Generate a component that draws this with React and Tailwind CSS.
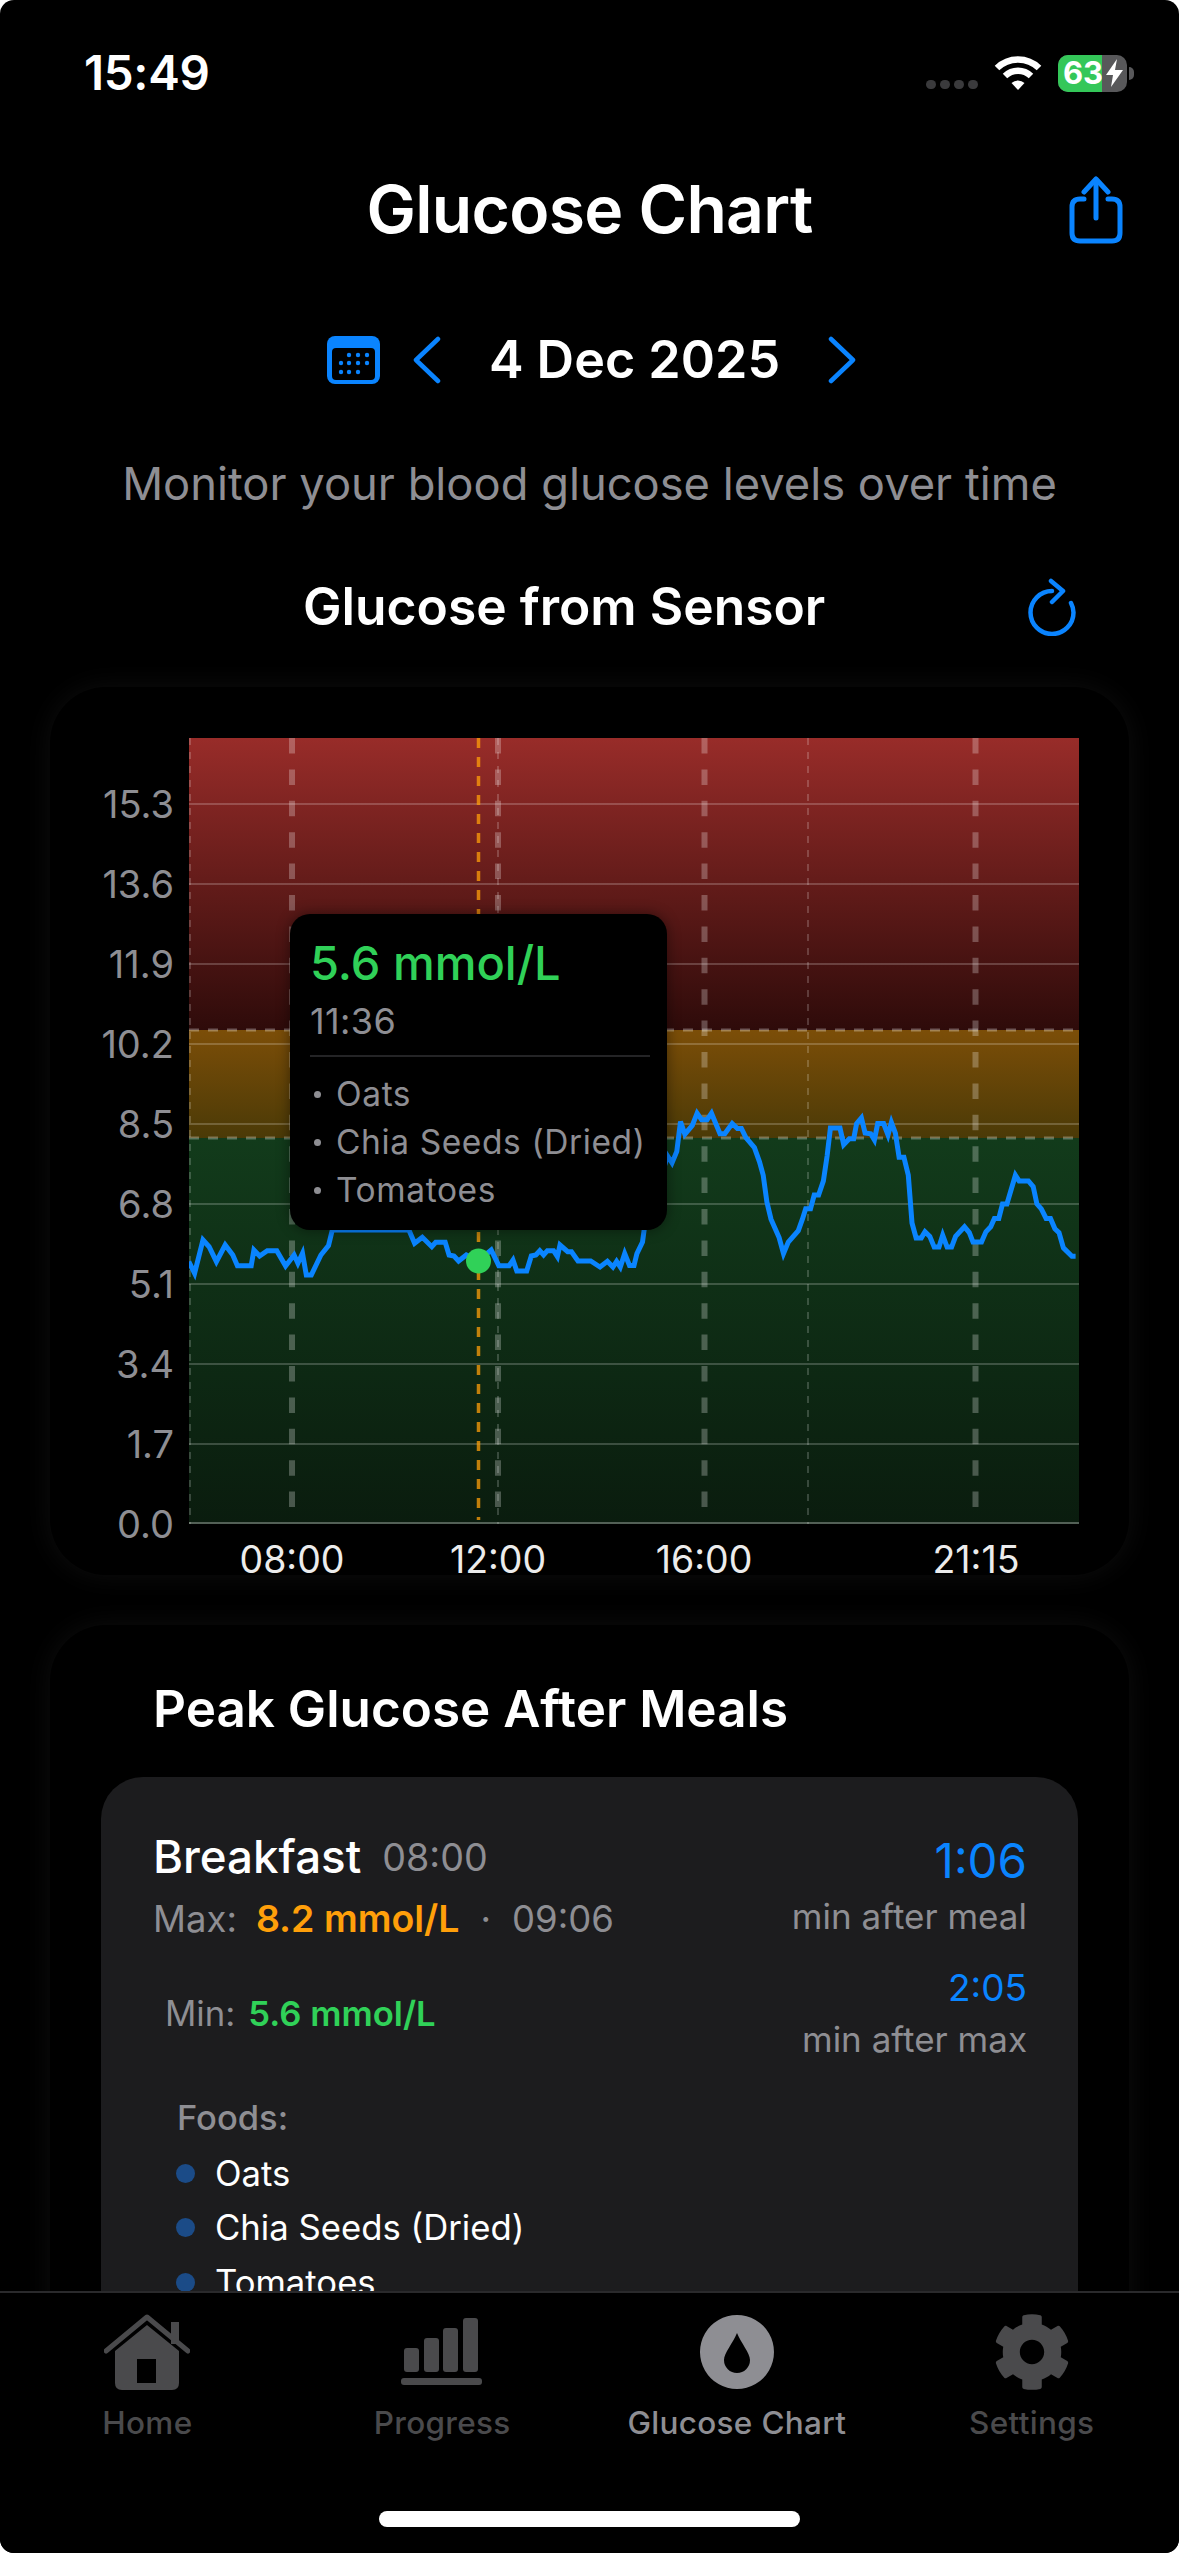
import React from "react";
import { FaCog } from "react-icons/fa";

const font = { fontFamily: "Inter, 'Noto Sans', sans-serif" };

// line samples read off two crops of the chart, converted to plot coordinates
const leftPts = [[415,485],[430,520],[452,420],[468,440],[487,485],[510,435],[530,465],[542,497],[578,497],[585,450],[600,468],[620,452],[645,452],[668,498],[690,465],[700,490],[712,460],[722,525],[735,525],[760,465],[780,437],[790,390],[990,390],[1005,430],[1025,412],[1050,440],[1060,427],[1085,427],[1095,465],[1108,468],[1120,483],[1140,465],[1172,482],[1205,450],[1225,497],[1252,497],[1262,480],[1272,513],[1298,513],[1310,468],[1322,465],[1332,452],[1342,465],[1352,452],[1368,452],[1378,470],[1385,435],[1405,455],[1415,455],[1432,483],[1465,483]];
const rightPts = [[0,1560],[20,1545],[35,1560],[45,1545],[55,1560],[67,1525],[80,1556],[92,1556],[100,1525],[115,1495],[120,1460],[183,1270],[195,1288],[208,1258],[218,1180],[230,1213],[250,1190],[263,1158],[275,1175],[290,1175],[302,1158],[325,1212],[338,1212],[358,1185],[372,1198],[383,1198],[395,1222],[418,1248],[432,1285],[442,1320],[452,1390],[463,1435],[485,1483],[497,1525],[510,1495],[537,1465],[548,1435],[557,1408],[570,1408],[580,1372],[592,1372],[605,1335],[615,1270],[624,1197],[650,1197],[660,1240],[675,1225],[687,1225],[695,1185],[708,1170],[718,1210],[733,1212],[743,1228],[752,1185],[768,1185],[780,1215],[789,1182],[800,1210],[810,1273],[823,1273],[835,1320],[845,1445],[856,1484],[870,1484],[880,1468],[893,1480],[905,1508],[918,1508],[928,1477],[940,1508],[952,1508],[963,1480],[987,1455],[1000,1470],[1010,1495],[1033,1495],[1045,1468],[1058,1455],[1068,1433],[1080,1433],[1090,1395],[1102,1395],[1125,1320],[1135,1335],[1160,1335],[1173,1350],[1183,1395],[1195,1408],[1208,1433],[1220,1433],[1232,1460],[1243,1470],[1255,1510],[1278,1532],[1288,1532]];
const linePts = [
  ...leftPts.map(([x, y]) => [x / 2.613 + 30 - 189, y / 3 + 1100 - 738]),
  ...rightPts.map(([x, y]) => [x / 2.708 + 600 - 189, y / 2.613 + 670 - 738]),
].map(([x, y]) => `${x.toFixed(1)},${y.toFixed(1)}`).join(" ");

const gridYs = [66, 146, 226, 306, 386, 466, 546, 626, 706];
const yLabels = ["15.3", "13.6", "11.9", "10.2", "8.5", "6.8", "5.1", "3.4", "1.7", "0.0"];

function Plot() {
  return (
    <svg width="890" height="786" viewBox="0 0 890 786" className="block">
      <defs>
        <linearGradient id="red" x1="0" y1="0" x2="0" y2="1">
          <stop offset="0" stopColor="#982c29" />
          <stop offset="1" stopColor="#2e0b0a" />
        </linearGradient>
        <linearGradient id="yellow" x1="0" y1="0" x2="0" y2="1">
          <stop offset="0" stopColor="#7c4e08" />
          <stop offset="1" stopColor="#4b3a07" />
        </linearGradient>
        <linearGradient id="green" x1="0" y1="0" x2="0" y2="1">
          <stop offset="0" stopColor="#123b1b" />
          <stop offset="1" stopColor="#0a1c0e" />
        </linearGradient>
      </defs>
      <rect x="0" y="0" width="890" height="292" fill="url(#red)" />
      <rect x="0" y="292" width="890" height="108" fill="url(#yellow)" />
      <rect x="0" y="400" width="890" height="386" fill="url(#green)" />

      {gridYs.map((y) => (
        <line key={y} x1="0" x2="890" y1={y} y2={y} stroke="#fff" strokeOpacity="0.27" strokeWidth="1.5" />
      ))}
      <line x1="0" x2="890" y1="785" y2="785" stroke="#fff" strokeOpacity="0.3" strokeWidth="2" />

      <line x1="0" x2="890" y1="292" y2="292" stroke="#fff" strokeOpacity="0.3" strokeWidth="3" strokeDasharray="10 9" />
      <line x1="0" x2="890" y1="400" y2="400" stroke="#fff" strokeOpacity="0.3" strokeWidth="3" strokeDasharray="10 9" />

      {[1, 309, 619].map((x) => (
        <line key={x} x1={x} x2={x} y1="0" y2="786" stroke="#fff" strokeOpacity="0.25" strokeWidth="1.5" strokeDasharray="7 7" />
      ))}
      {[103, 309, 515.5, 786.5].map((x) => (
        <line key={x} x1={x} x2={x} y1="0" y2="770" stroke="#fff" strokeOpacity="0.26" strokeWidth="6" strokeDasharray="15.5 15.9" />
      ))}
      <line x1="289.5" x2="289.5" y1="0" y2="782" stroke="#ff9f0a" strokeOpacity="0.75" strokeWidth="3.5" strokeDasharray="10 9" />

      <polyline points={linePts} fill="none" stroke="#0a84ff" strokeWidth="5" strokeLinejoin="miter" />
      <circle cx="289.5" cy="523" r="12.5" fill="#30d158" />
    </svg>
  );
}

function Tooltip() {
  return (
    <div className="absolute left-[101px] top-[176px] h-[316px] w-[377px] rounded-[20px] bg-black pl-[20px] pr-[17px] pt-[20px] shadow-[0_0_14px_rgba(0,0,0,0.45)]">
      <div className="h-[58px] text-[47px] leading-[58px] font-medium whitespace-nowrap text-[#30d158]">5.6 mmol/L</div>
      <div className="h-[58px] text-[36px] leading-[58px] tracking-[0.4px] text-[#8e8e93]">11:36</div>
      <div className="mt-[5px] h-[2px] bg-[#242426]" />
      <div className="mt-[13px] flex flex-col text-[33.5px] leading-[48px] tracking-[0.6px] text-[#8e8e93]">
        {["Oats", "Chia Seeds (Dried)", "Tomatoes"].map((f) => (
          <div key={f} className="flex items-center whitespace-nowrap">
            <span className="mr-[15px] ml-[4px] h-[7px] w-[7px] rounded-full bg-[#8e8e93]" />
            {f}
          </div>
        ))}
      </div>
    </div>
  );
}

function HomeIcon() {
  return (
    <svg width="86" height="78" viewBox="0 0 86 78" fill="#4a4a4c">
      <path d="M2 38 L43 4 L84 38" fill="none" stroke="#4a4a4c" strokeWidth="5" strokeLinecap="round" strokeLinejoin="round" />
      <rect x="67" y="9" width="8" height="22" />
      <path fillRule="evenodd" d="M11 38 L43 12 L75 38 V70 q0 7 -7 7 H18 q-7 0 -7 -7 Z M33 46 V70 H52 V46 Z" />
    </svg>
  );
}

function ProgressIcon() {
  return (
    <svg width="82" height="68" viewBox="0 0 82 68" fill="#4a4a4c">
      <rect x="3" y="30" width="15" height="24" rx="3" />
      <rect x="23" y="20" width="15" height="34" rx="3" />
      <rect x="42" y="10" width="15" height="44" rx="3" />
      <rect x="62" y="0" width="15" height="54" rx="3" />
      <rect x="0" y="60" width="81" height="7" rx="3" />
    </svg>
  );
}

function DropIcon() {
  return (
    <svg width="74" height="74" viewBox="0 0 74 74" fill="#8e8e93">
      <path fillRule="evenodd" d="M37 0 A37 37 0 1 1 36.99 0 Z M37 18 C33 28 24 38 24 45 A13 13 0 0 0 50 45 C50 38 41 28 37 18 Z" />
    </svg>
  );
}

function Tab({ icon, label, active }) {
  return (
    <div className="flex flex-col items-center">
      <div className="flex h-[80px] items-center justify-center">{icon}</div>
      <div className={`mt-[11px] h-[40px] text-[31.5px] leading-[40px] font-medium tracking-[0.3px] ${active ? "text-[#8e8e93]" : "text-[#4a4a4c]"}`}>
        {label}
      </div>
    </div>
  );
}

function MealCard() {
  return (
    <div className="mx-[51px] h-[700px] rounded-[42px] bg-[#1c1c1e] pt-[53px] pr-[51px] pl-[52px]">
      <div className="flex justify-between">
        <div>
          <div className="flex h-[54px] items-center">
            <span className="text-[45.7px] font-medium text-white">Breakfast</span>
            <span className="ml-[21px] text-[37.7px] text-[#8e8e93]">08:00</span>
          </div>
          <div className="mt-[8px] flex h-[54px] items-center text-[36.5px] text-[#8e8e93]">
            <span>Max:</span>
            <span className="ml-[19px] text-[37.5px] font-semibold text-[#ff9f0a]">8.2 mmol/L</span>
            <span className="ml-[21px]">·</span>
            <span className="ml-[21px]">09:06</span>
          </div>
        </div>
        <div className="mt-[4px] text-right">
          <div className="h-[54px] text-[47.5px] leading-[54px] text-[#0a84ff]">1:06</div>
          <div className="mt-[6px] h-[44px] text-[35px] leading-[44px] text-[#8e8e93]">min after meal</div>
        </div>
      </div>

      <div className="mt-[20px] flex items-center justify-between">
        <div className="-mt-[1px] flex items-center pl-[12px] text-[34.7px]">
          <span className="text-[#8e8e93]">Min:</span>
          <span className="ml-[13px] font-semibold text-[#30d158]">5.6 mmol/L</span>
        </div>
        <div className="text-right">
          <div className="h-[44px] text-[37px] leading-[44px] text-[#0a84ff]">2:05</div>
          <div className="mt-[7px] h-[44px] text-[35px] leading-[44px] text-[#8e8e93]">min after max</div>
        </div>
      </div>

      <div className="mt-[35px] pl-[24px]">
        <div className="h-[44px] text-[34.5px] leading-[44px] font-medium text-[#8e8e93]">Foods:</div>
        <div className="mt-[11px] -ml-[1px] flex flex-col gap-[10.5px]">
          {["Oats", "Chia Seeds (Dried)", "Tomatoes"].map((f) => (
            <div key={f} className="flex h-[44px] items-center text-[34.7px] whitespace-nowrap text-white">
              <span className="mr-[20px] h-[19px] w-[19px] rounded-full bg-[#1b4b87]" />
              {f}
            </div>
          ))}
        </div>
      </div>
    </div>
  );
}

export default function App() {
  return (
    <div className="h-[2553px] w-[1179px] bg-white" style={font}>
      <div className="relative h-full w-full overflow-hidden rounded-[14px] bg-black">
        {/* status bar */}
        <div className="flex h-[146px] items-center justify-between pr-[45px] pl-[84px]">
          <span className="text-[47.5px] font-semibold tracking-[-0.3px] text-white">15:49</span>
          <div className="flex items-center">
            <div className="mt-[22px] mr-[16px] flex gap-[4px]">
              <span className="h-[9px] w-[10px] rounded-full bg-[#3a3a3c]" />
              <span className="h-[9px] w-[10px] rounded-full bg-[#3a3a3c]" />
              <span className="h-[9px] w-[10px] rounded-full bg-[#3a3a3c]" />
              <span className="h-[9px] w-[10px] rounded-full bg-[#3a3a3c]" />
            </div>
            <svg width="48" height="36" viewBox="0 0 48 36" fill="none" stroke="#fff" strokeWidth="6.5">
              <path d="M3 13 A30 30 0 0 1 45 13" />
              <path d="M11 21 A19 19 0 0 1 37 21" />
              <path d="M17.5 28 A9.5 9.5 0 0 1 30.5 28 L24 35 Z" fill="#fff" stroke="none" />
            </svg>
            <div className="ml-[16px] flex h-[37px] w-[69px] overflow-hidden rounded-[10px] bg-[#58585a]">
              <div className="flex w-[44px] items-center justify-center bg-[#34c759] pl-[6px] text-[31px] font-bold text-white">63</div>
              <div className="flex flex-1 items-center justify-center">
                <svg width="17" height="28" viewBox="0 0 17 28" fill="#fff">
                  <path d="M11 0 L0 16 H7 L5 28 L17 11 H9 Z" />
                </svg>
              </div>
            </div>
            <div className="ml-[2px] h-[13px] w-[5px] rounded-r-full bg-[#58585a]" />
          </div>
        </div>

        {/* title */}
        <div className="relative flex h-[126px] items-center justify-center">
          <h1 className="text-[66px] font-semibold tracking-[-0.7px] text-white">Glucose Chart</h1>
          <svg className="absolute top-[30px] right-[56px]" width="54" height="68" viewBox="0 0 54 68" fill="none" stroke="#0a84ff" strokeWidth="5" strokeLinecap="round" strokeLinejoin="round">
            <path d="M27 4 V42" />
            <path d="M15 16 L27 3 L39 16" />
            <path d="M15 23 H11 Q3 23 3 31 V57 Q3 65 11 65 H43 Q51 65 51 57 V31 Q51 23 43 23 H39" />
          </svg>
        </div>

        {/* date switcher */}
        <div className="flex h-[176px] items-center justify-center pl-[4px]">
          <svg width="53" height="48" viewBox="0 0 53 48">
            <rect x="0" y="0" width="53" height="48" rx="8" fill="#0a84ff" />
            <rect x="5" y="12" width="43" height="32" rx="4" fill="#000" />
            {[[22, 19], [31, 19], [40, 19], [14, 27], [22, 27], [31, 27], [40, 27], [14, 36], [22, 36], [31, 36]].map(([x, y]) => (
              <circle key={`${x}-${y}`} cx={x} cy={y} r="2.2" fill="#0a84ff" />
            ))}
          </svg>
          <svg className="ml-[33px]" width="28" height="48" viewBox="0 0 28 48" fill="none" stroke="#0a84ff" strokeWidth="4.5" strokeLinecap="round" strokeLinejoin="round">
            <path d="M25 3 L3 24 L25 45" />
          </svg>
          <span className="mx-[48px] text-[52px] font-semibold text-white">4 Dec 2025</span>
          <svg width="28" height="48" viewBox="0 0 28 48" fill="none" stroke="#0a84ff" strokeWidth="4.5" strokeLinecap="round" strokeLinejoin="round">
            <path d="M3 3 L25 24 L3 45" />
          </svg>
        </div>

        <div className="flex h-[72px] items-center justify-center text-[45.3px] whitespace-nowrap text-[#8e8e93]">Monitor your blood glucose levels over time</div>

        <div className="mt-[27px] flex h-[120px] items-center justify-between pr-[100px] pl-[303px]">
          <h2 className="text-[51.5px] font-semibold text-white">Glucose from Sensor</h2>
          <svg width="52" height="58" viewBox="0 0 52 58" fill="none" stroke="#0a84ff" strokeWidth="4.5" strokeLinecap="round" strokeLinejoin="round">
            <path d="M25 13 A21.5 21.5 0 1 0 46.5 34.5 A21.5 21.5 0 0 0 44 25" />
            <path d="M24 3 L36 13 L25 24" />
          </svg>
        </div>

        {/* chart card */}
        <div className="mx-[50px] mt-[20px] flex h-[888px] rounded-[56px] bg-black pt-[51px] pl-[12px] shadow-[0_0_28px_rgba(255,255,255,0.055)]">
          <div className="w-[112px] pt-[26px] text-right text-[38px] text-[#8e8e93]">
            {yLabels.map((l) => (
              <div key={l} className="flex h-[80px] items-center justify-end">{l}</div>
            ))}
          </div>
          <div className="ml-[15px] w-[890px]">
            <div className="relative">
              <Plot />
              <Tooltip />
            </div>
            <div className="flex h-[72px] items-center text-[37.5px] text-[#ececec]">
              <div className="w-[206px] text-center">08:00</div>
              <div className="w-[206px] text-center">12:00</div>
              <div className="w-[206px] text-center">16:00</div>
              <div className="ml-[99px] w-[140px] text-center">21:15</div>
            </div>
          </div>
        </div>

        {/* meals card */}
        <div className="mx-[50px] mt-[50px] h-[1000px] rounded-[56px] bg-black pt-[53px] shadow-[0_0_28px_rgba(255,255,255,0.055)]">
          <h2 className="h-[60px] pl-[103px] text-[51.2px] leading-[60px] font-semibold text-white">Peak Glucose After Meals</h2>
          <div className="mt-[39px]">
            <MealCard />
          </div>
        </div>

        {/* tab bar */}
        <div className="absolute top-[2291px] right-0 bottom-0 left-0 border-t-2 border-[#2a2a2c] bg-black pt-[19px]">
          <div className="grid grid-cols-4">
            <Tab icon={<HomeIcon />} label="Home" />
            <Tab icon={<ProgressIcon />} label="Progress" />
            <Tab icon={<DropIcon />} label="Glucose Chart" active />
            <Tab icon={<FaCog size={78} color="#4a4a4c" />} label="Settings" />
          </div>
          <div className="mx-auto mt-[68px] h-[16px] w-[421px] rounded-full bg-white" />
        </div>
      </div>
    </div>
  );
}
